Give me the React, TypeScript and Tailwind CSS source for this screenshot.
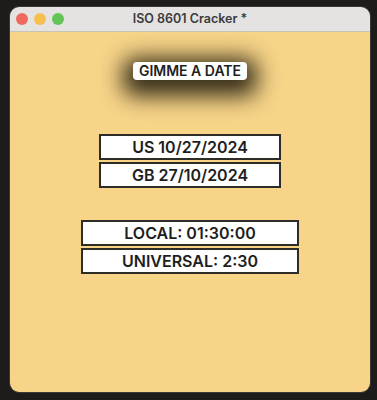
import React from 'react';

const Box: React.FC<{ text: string; w: string }> = ({ text, w }) => (
  <div className={`${w} h-[26px] bg-white border-2 border-[#2e2c27] flex items-center justify-center text-[16px] font-semibold text-[#1e1e1e] leading-none`}>
    {text}
  </div>
);

export default function App() {
  return (
    <div className="w-[377px] h-[400px] bg-[#1d1c1b] pt-[6px] pl-[9px]" style={{ fontFamily: 'Inter, "Liberation Sans", sans-serif' }}>
      <div className="w-[362px] h-[387px] rounded-[10px] overflow-hidden flex flex-col border border-[#3a3833]">
        <div className="h-[25px] bg-[#e4e3e2] border-b border-[#c9c4b8] flex items-center relative">
          <div className="flex gap-[6px] pl-[6px]">
            <span className="w-[12px] h-[12px] rounded-full bg-[#ee6a5f]" />
            <span className="w-[12px] h-[12px] rounded-full bg-[#f5bf4f]" />
            <span className="w-[12px] h-[12px] rounded-full bg-[#61c454]" />
          </div>
          <div className="absolute inset-0 flex items-center justify-center text-[12.5px] font-semibold text-[#3b3b3b]">
            ISO 8601 Cracker *
          </div>
        </div>
        <div className="flex-1 bg-[#f7d488] flex flex-col items-center">
          <div className="mt-[30px] w-[114px] h-[18px] bg-white rounded-[4px] flex items-center justify-center text-[14px] font-semibold text-[#1e1e1e] leading-none shadow-[0_6px_22px_10px_rgba(20,15,5,0.85)]">
            GIMME A DATE
          </div>
          <div className="mt-[54px] flex flex-col gap-[2px]">
            <Box text="US 10/27/2024" w="w-[182px]" />
            <Box text="GB 27/10/2024" w="w-[182px]" />
          </div>
          <div className="mt-[32px] flex flex-col gap-[2px]">
            <Box text="LOCAL: 01:30:00" w="w-[218px]" />
            <Box text="UNIVERSAL: 2:30" w="w-[218px]" />
          </div>
        </div>
      </div>
    </div>
  );
}
